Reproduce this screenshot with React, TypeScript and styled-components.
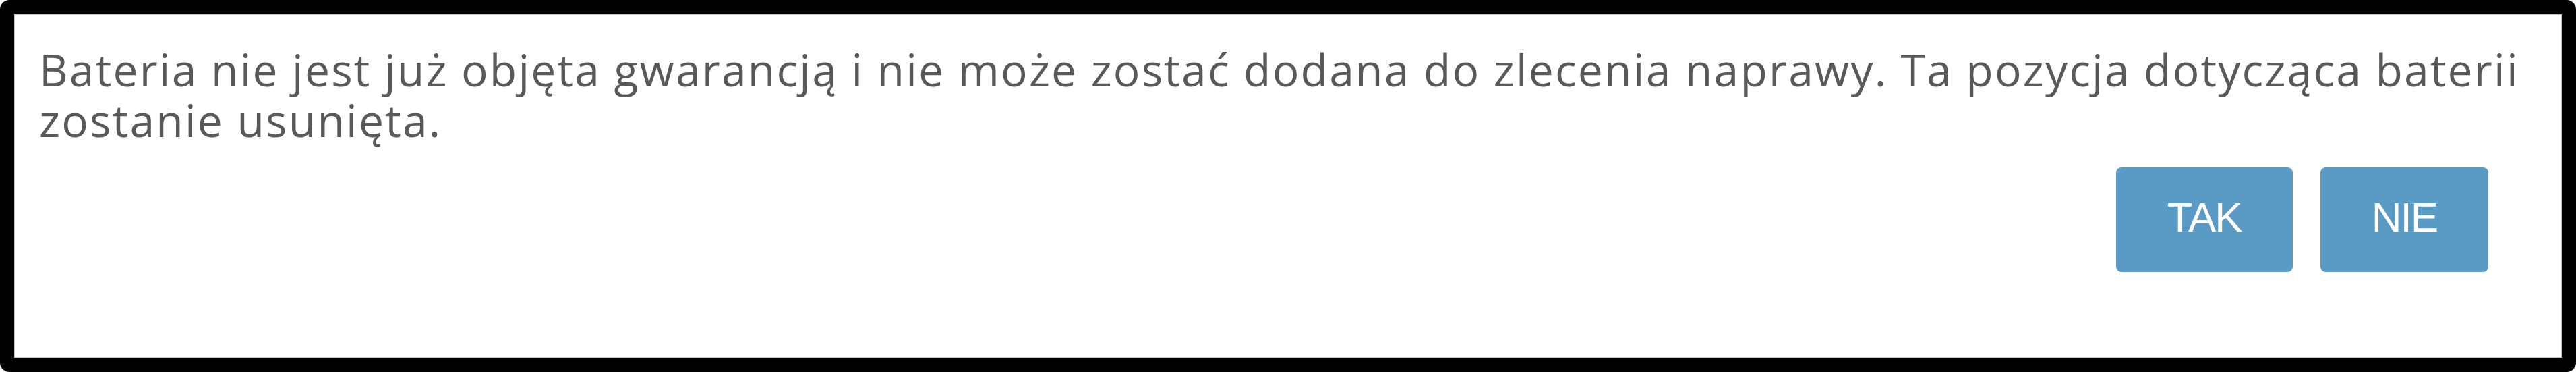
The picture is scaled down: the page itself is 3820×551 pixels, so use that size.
import React from 'react';
import styled, { createGlobalStyle } from 'styled-components';

const GlobalStyle = createGlobalStyle`
  html, body {
    margin: 0;
    padding: 0;
    background: #ffffff;
  }

  * {
    box-sizing: border-box;
  }
`;

const Frame = styled.div`
  width: 3820px;
  height: 551px;
  border: 21px solid #000000;
  border-radius: 14px;
  background: #000000;
`;

const Panel = styled.div`
  height: 100%;
  display: flex;
  flex-direction: column;
  background: #ffffff;
  border: 1px solid #c9c9c9;
  padding: 43px 20px 0 36px;
`;

const Message = styled.p`
  margin: 0;
  font-family: 'Open Sans', 'Liberation Sans', sans-serif;
  font-size: 66px;
  line-height: 75px;
  letter-spacing: 2.2px;
  color: #595959;
`;

const Actions = styled.div`
  display: flex;
  justify-content: flex-end;
  gap: 41px;
  margin-top: 33px;
  padding-right: 88px;
`;

const ActionButton = styled.button`
  height: 155px;
  padding: 0 76px 8px;
  border: none;
  border-radius: 8px;
  background: #5a9bc6;
  color: #ffffff;
  font-family: 'Liberation Sans', Arial, sans-serif;
  font-size: 62px;
  letter-spacing: -2px;
  line-height: 1;
  cursor: pointer;
`;

interface ConfirmBoxProps {
  message: string;
  onConfirm?: () => void;
  onCancel?: () => void;
}

const ConfirmBox: React.FC<ConfirmBoxProps> = ({ message, onConfirm, onCancel }) => (
  <Frame>
    <Panel>
      <Message>{message}</Message>
      <Actions>
        <ActionButton type="button" onClick={onConfirm}>TAK</ActionButton>
        <ActionButton type="button" onClick={onCancel}>NIE</ActionButton>
      </Actions>
    </Panel>
  </Frame>
);

export default function App() {
  return (
    <>
      <GlobalStyle />
      <ConfirmBox
        message="Bateria nie jest już objęta gwarancją i nie może zostać dodana do zlecenia naprawy. Ta pozycja dotycząca baterii zostanie usunięta."
      />
    </>
  );
}
